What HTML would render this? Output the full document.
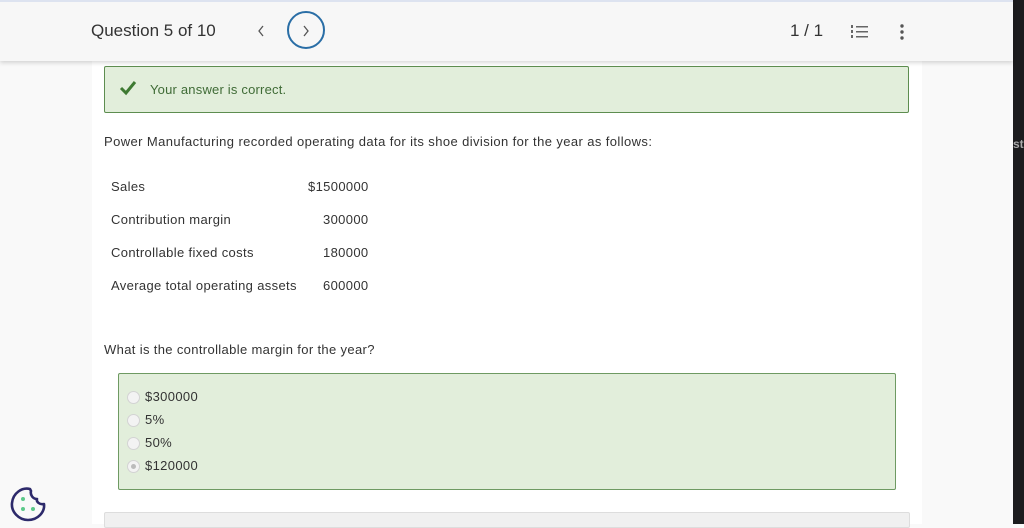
<!DOCTYPE html>
<html><head><style>
body{margin:0;width:1024px;height:524px;overflow:hidden;background:#f9f9f9;font-family:"Liberation Sans",sans-serif;color:#333;position:relative}
.dark{position:absolute;left:1013px;top:0;width:11px;height:524px;background:#1c1c1e;color:#aaa;font-size:12px;font-weight:bold}
.content{position:absolute;left:92px;top:60px;width:830px;height:464px;background:#fff}
.hdr{position:absolute;left:0;top:0;width:1013px;height:61px;background:#f7f7f7;box-shadow:0 2px 4px rgba(0,0,0,.15);border-top:2px solid #dde3f0;box-sizing:border-box}
.abs{position:absolute;white-space:nowrap}
.ok{position:absolute;left:104px;top:66px;width:803px;height:45px;background:#e2eedb;border:1px solid #5d8d4f;border-radius:2px}
.ans{position:absolute;left:118px;top:373px;width:776px;height:115px;background:#e2eedb;border:1px solid #6e9a62;border-radius:2px}
.r{position:absolute;width:11px;height:11px;border-radius:50%;border:1px solid #d3d3d3;background:#f3f3f3}
.t{font-size:13px;color:#333;letter-spacing:0.35px}
</style></head><body>
<div class="dark"><span style="position:absolute;top:137px;left:0">st</span></div>
<div class="content"></div>
<div class="hdr">
<div class="abs" style="left:91px;top:19px;font-size:17px;color:#333">Question 5 of 10</div>
<svg class="abs" style="left:256px;top:22px" width="10" height="14"><path d="M7 2 L3 7 L7 12" fill="none" stroke="#555" stroke-width="1.3"/></svg>
<div class="abs" style="left:287px;top:9px;width:38px;height:38px;border:2px solid #2a6ea6;border-radius:50%;box-sizing:border-box"></div>
<svg class="abs" style="left:301px;top:22px" width="10" height="14"><path d="M3 2 L7 7 L3 12" fill="none" stroke="#555" stroke-width="1.3"/></svg>
<div class="abs" style="left:790px;top:19px;font-size:17px;color:#333">1 / 1</div>
<svg class="abs" style="left:850px;top:22px" width="20" height="16"><g fill="#666"><rect x="6" y="2" width="12" height="1.5"/><rect x="6" y="7" width="12" height="1.5"/><rect x="6" y="12" width="12" height="1.5"/><rect x="1" y="1" width="2" height="3"/><rect x="1" y="6" width="2" height="3"/><rect x="1" y="11" width="2" height="3"/></g></svg>
<svg class="abs" style="left:898px;top:21px" width="8" height="18"><g fill="#555"><circle cx="4" cy="3" r="1.7"/><circle cx="4" cy="9" r="1.7"/><circle cx="4" cy="15" r="1.7"/></g></svg>
</div>
<div class="ok">
<svg class="abs" style="left:14px;top:13px" width="18" height="16"><path d="M2 8 L7 13 L16 2" fill="none" stroke="#3e7a32" stroke-width="3"/></svg>
<div class="abs" style="left:45px;top:15px;font-size:13px;color:#3f6b36;letter-spacing:0.2px">Your answer is correct.</div>
</div>
<div class="abs t" style="left:104px;top:134px;letter-spacing:0.4px">Power Manufacturing recorded operating data for its shoe division for the year as follows:</div>
<div class="abs t" style="left:111px;top:179px">Sales</div><div class="abs t" style="left:308px;top:179px">$1500000</div>
<div class="abs t" style="left:111px;top:212px">Contribution margin</div><div class="abs t" style="left:323px;top:212px">300000</div>
<div class="abs t" style="left:111px;top:245px">Controllable fixed costs</div><div class="abs t" style="left:323px;top:245px">180000</div>
<div class="abs t" style="left:111px;top:278px">Average total operating assets</div><div class="abs t" style="left:323px;top:278px">600000</div>
<div class="abs t" style="left:104px;top:342px">What is the controllable margin for the year?</div>
<div class="ans"></div>
<div class="r" style="left:127px;top:391px"></div><div class="abs t" style="left:145px;top:389px">$300000</div>
<div class="r" style="left:127px;top:414px"></div><div class="abs t" style="left:145px;top:412px">5%</div>
<div class="r" style="left:127px;top:437px"></div><div class="abs t" style="left:145px;top:435px">50%</div>
<div class="r" style="left:127px;top:460px"><div style="position:absolute;left:3px;top:3px;width:5px;height:5px;border-radius:50%;background:#bbb"></div></div><div class="abs t" style="left:145px;top:458px">$120000</div>
<div class="abs" style="left:104px;top:512px;width:804px;height:14px;background:#f0f0f0;border:1px solid #ddd;border-radius:2px"></div>
<svg class="abs" style="left:8px;top:484px" width="40" height="40" viewBox="0 0 40 40"><path d="M22 5 C14 3 5 9 4 19 C3 28 11 36 20 36 C30 36 37 28 36 20 C32 21 28 18 29 15 C25 15 22 11 23 7 Z" fill="none" stroke="#2d2a6b" stroke-width="2.6" stroke-linejoin="round"/><circle cx="15" cy="15" r="2" fill="#5cc98a"/><circle cx="15" cy="25" r="2" fill="#5cc98a"/><circle cx="25" cy="25" r="2" fill="#5cc98a"/></svg>
</body></html>
